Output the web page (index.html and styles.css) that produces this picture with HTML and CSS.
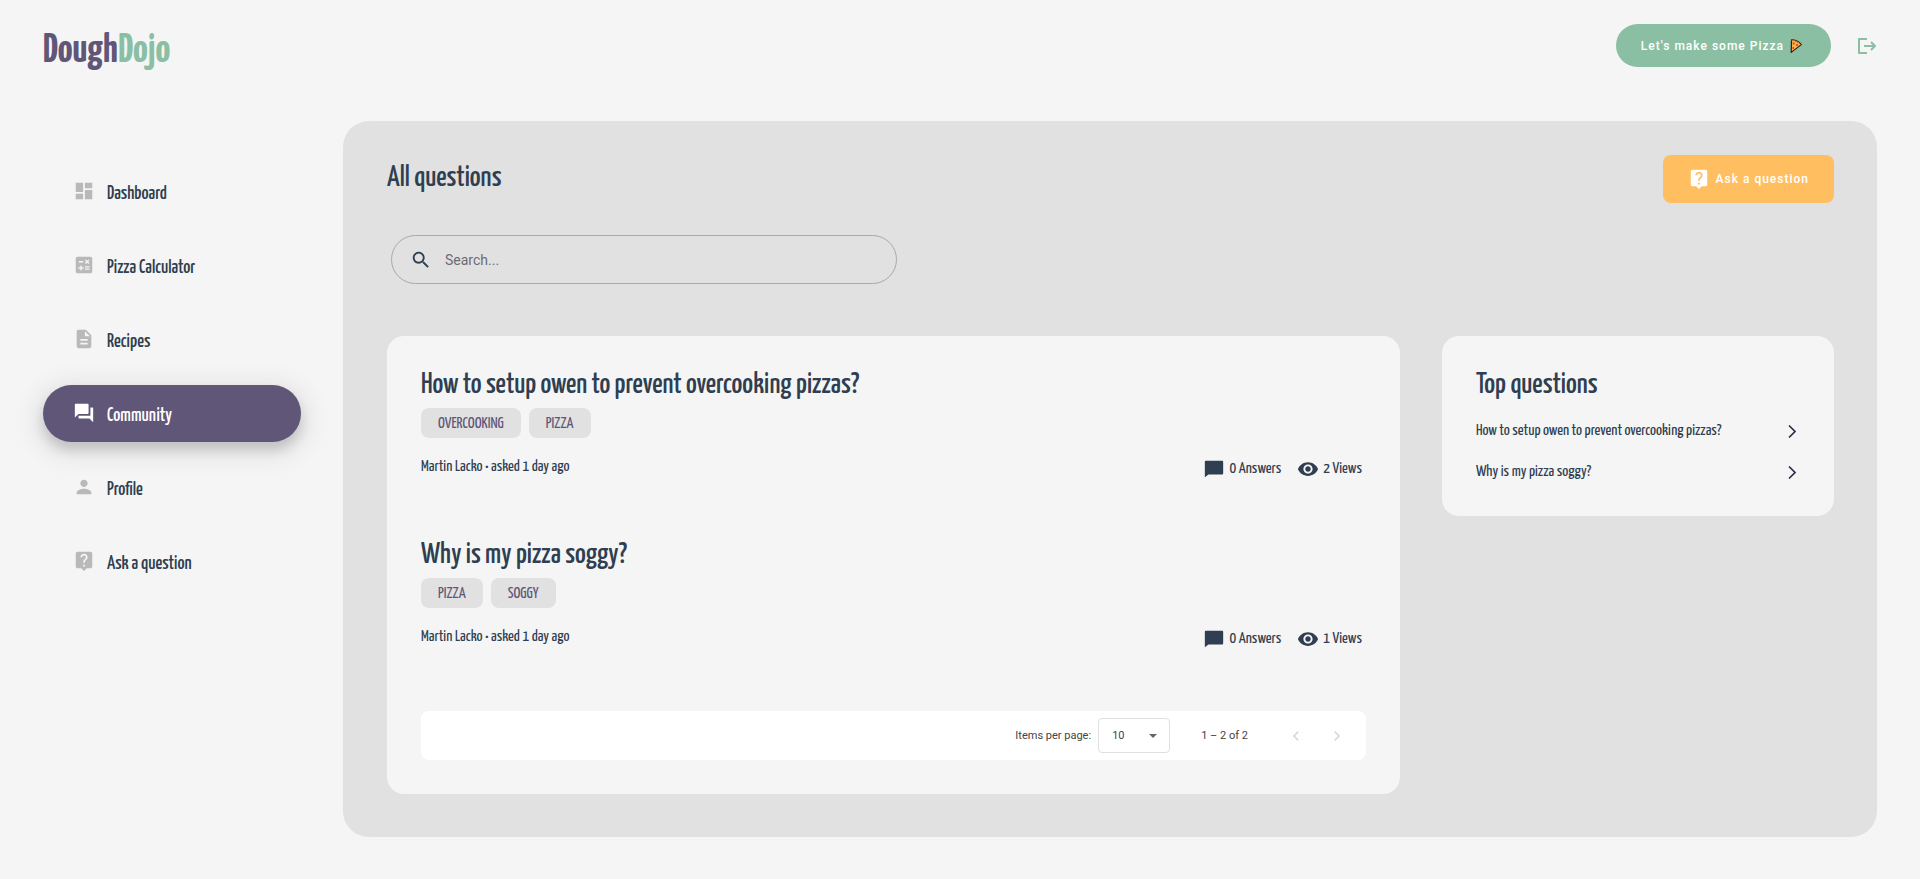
FILE: index.html
```html
<!DOCTYPE html>
<html lang="en">
<head>
    <meta charset="UTF-8">
    <meta name="viewport" content="width=device-width, initial-scale=1">
    <title>DoughDojo</title>
    <link rel="stylesheet" href="styles.css">
</head>
<body>
    <header class="header">
        <a href="#" class="logo">Dough<span class="logo-accent">Dojo</span></a>
        <div class="header-actions">
            <button class="btn btn-green">Let's make some Pizza
                <svg class="pizza" viewBox="0 0 12 14" preserveAspectRatio="xMinYMid"><path d="M1.5.8C5 .6 9.5 3 11.3 5.6L1.2 13.4z" fill="#f9b04a" stroke="#2b1d14" stroke-width="1.2" stroke-linejoin="round"/><path d="M1.6 1.4C5 1.2 9 3.3 10.8 5.7" fill="none" stroke="#c8742c" stroke-width="1"/><circle cx="3.6" cy="4.4" r="1" fill="#d9382c"/><circle cx="7" cy="6" r="1" fill="#d9382c"/><circle cx="3.2" cy="9" r=".9" fill="#d9382c"/></svg>
            </button>
            <button class="icon-btn logout" aria-label="Log out">
                <svg viewBox="0 0 20 18" fill="none" stroke="currentColor" stroke-width="2" stroke-linejoin="round"><path d="M10 2H2v14h8M7 9h11M14 5l4 4-4 4"/></svg>
            </button>
        </div>
    </header>

    <div class="layout">
        <nav class="sidebar">
            <a href="#" class="nav-item">
                <svg class="icon" viewBox="0 0 24 24"><path d="M3 13h8V3H3v10zm0 8h8v-6H3v6zm10 0h8V11h-8v10zm0-18v6h8V3h-8z"/></svg>
                <span>Dashboard</span>
            </a>
            <a href="#" class="nav-item">
                <svg class="icon" viewBox="0 0 24 24"><path d="M19 3H5c-1.1 0-2 .9-2 2v14c0 1.1.9 2 2 2h14c1.1 0 2-.9 2-2V5c0-1.1-.9-2-2-2zm-5.97 4.06L14.09 6l1.41 1.41L16.91 6l1.06 1.06-1.41 1.41 1.41 1.41-1.06 1.06-1.41-1.4-1.41 1.41-1.06-1.06 1.41-1.41-1.41-1.42zm-6.78.66h5v1.5h-5v-1.5zM11.5 16h-2v2H8v-2H6v-1.5h2v-2h1.5v2h2V16zm6.5 1.25h-5v-1.5h5v1.5zm0-2.5h-5v-1.5h5v1.5z"/></svg>
                <span>Pizza Calculator</span>
            </a>
            <a href="#" class="nav-item">
                <svg class="icon" viewBox="0 0 24 24"><path d="M14 2H6c-1.1 0-2 .9-2 2v16c0 1.1.9 2 2 2h12c1.1 0 2-.9 2-2V8l-6-6zm2 16H8v-2h8v2zm0-4H8v-2h8v2zm-3-5V3.5L18.5 9H13z"/></svg>
                <span>Recipes</span>
            </a>
            <a href="#" class="nav-item active">
                <svg class="icon" viewBox="0 0 24 24"><path d="M21 6h-2v9H6v2c0 .55.45 1 1 1h11l4 4V7c0-.55-.45-1-1-1zm-4 6V3c0-.55-.45-1-1-1H3c-.55 0-1 .45-1 1v14l4-4h10c.55 0 1-.45 1-1z"/></svg>
                <span>Community</span>
            </a>
            <a href="#" class="nav-item">
                <svg class="icon" viewBox="0 0 24 24"><path d="M12 12c2.21 0 4-1.79 4-4s-1.79-4-4-4-4 1.79-4 4 1.79 4 4 4zm0 2c-2.67 0-8 1.34-8 4v2h16v-2c0-2.66-5.33-4-8-4z"/></svg>
                <span>Profile</span>
            </a>
            <a href="#" class="nav-item">
                <svg class="icon" viewBox="0 0 24 24"><path d="M19 2H5c-1.11 0-2 .9-2 2v14c0 1.1.89 2 2 2h4l3 3 3-3h4c1.1 0 2-.9 2-2V4c0-1.1-.9-2-2-2zm-6 16h-2v-2h2v2zm2.07-7.75l-.9.92C13.45 11.9 13 12.5 13 14h-2v-.5c0-1.1.45-2.1 1.17-2.83l1.24-1.26c.37-.36.59-.86.59-1.41 0-1.1-.9-2-2-2s-2 .9-2 2H8c0-2.21 1.79-4 4-4s4 1.79 4 4c0 .88-.36 1.68-.93 2.25z"/></svg>
                <span>Ask a question</span>
            </a>
        </nav>

        <main class="panel">
            <div class="panel-head">
                <h1 class="title">All questions</h1>
                <button class="btn btn-orange">
                    <svg class="icon" viewBox="0 0 24 24"><path d="M19 2H5c-1.11 0-2 .9-2 2v14c0 1.1.89 2 2 2h4l3 3 3-3h4c1.1 0 2-.9 2-2V4c0-1.1-.9-2-2-2zm-6 16h-2v-2h2v2zm2.07-7.75l-.9.92C13.45 11.9 13 12.5 13 14h-2v-.5c0-1.1.45-2.1 1.17-2.83l1.24-1.26c.37-.36.59-.86.59-1.41 0-1.1-.9-2-2-2s-2 .9-2 2H8c0-2.21 1.79-4 4-4s4 1.79 4 4c0 .88-.36 1.68-.93 2.25z"/></svg>
                    Ask a question
                </button>
            </div>

            <label class="search">
                <svg class="icon" viewBox="0 0 24 24"><path d="M15.5 14h-.79l-.28-.27C15.41 12.59 16 11.11 16 9.5 16 5.91 13.09 3 9.5 3S3 5.91 3 9.5 5.91 16 9.5 16c1.61 0 3.09-.59 4.23-1.57l.27.28v.79l5 4.99L20.49 19l-4.99-5zm-6 0C7.01 14 5 11.99 5 9.5S7.01 5 9.5 5 14 7.01 14 9.5 11.99 14 9.5 14z"/></svg>
                <input type="text" placeholder="Search..." aria-label="Search">
            </label>

            <div class="columns">
                <section class="card">
                    <article class="question">
                        <h2 class="title">How to setup owen to prevent overcooking pizzas?</h2>
                        <div class="tags">
                            <span class="tag">OVERCOOKING</span>
                            <span class="tag">PIZZA</span>
                        </div>
                        <div class="meta">
                            <span>Martin Lacko • asked 1 day ago</span>
                            <div class="stats">
                                <span class="stat"><svg class="icon" viewBox="0 0 24 24"><path d="M21 3H3c-.6 0-1 .4-1 1v17l4-3h15c.6 0 1-.4 1-1V4c0-.6-.4-1-1-1z"/></svg>0 Answers</span>
                                <span class="stat"><svg class="icon" viewBox="0 0 24 24"><path d="M12 4.5C7 4.5 2.73 7.61 1 12c1.73 4.39 6 7.5 11 7.5s9.27-3.11 11-7.5c-1.73-4.39-6-7.5-11-7.5zM12 17c-2.76 0-5-2.24-5-5s2.24-5 5-5 5 2.24 5 5-2.24 5-5 5zm0-8c-1.66 0-3 1.34-3 3s1.34 3 3 3 3-1.34 3-3-1.34-3-3-3z"/></svg>2 Views</span>
                            </div>
                        </div>
                    </article>
                    <article class="question">
                        <h2 class="title">Why is my pizza soggy?</h2>
                        <div class="tags">
                            <span class="tag">PIZZA</span>
                            <span class="tag">SOGGY</span>
                        </div>
                        <div class="meta">
                            <span>Martin Lacko • asked 1 day ago</span>
                            <div class="stats">
                                <span class="stat"><svg class="icon" viewBox="0 0 24 24"><path d="M21 3H3c-.6 0-1 .4-1 1v17l4-3h15c.6 0 1-.4 1-1V4c0-.6-.4-1-1-1z"/></svg>0 Answers</span>
                                <span class="stat"><svg class="icon" viewBox="0 0 24 24"><path d="M12 4.5C7 4.5 2.73 7.61 1 12c1.73 4.39 6 7.5 11 7.5s9.27-3.11 11-7.5c-1.73-4.39-6-7.5-11-7.5zM12 17c-2.76 0-5-2.24-5-5s2.24-5 5-5 5 2.24 5 5-2.24 5-5 5zm0-8c-1.66 0-3 1.34-3 3s1.34 3 3 3 3-1.34 3-3-1.34-3-3-3z"/></svg>1 Views</span>
                            </div>
                        </div>
                    </article>

                    <div class="paginator">
                        <label for="pageSize">Items per page:</label>
                        <div class="select">
                            <select id="pageSize">
                                <option>5</option>
                                <option selected>10</option>
                                <option>25</option>
                            </select>
                        </div>
                        <span class="range">1 – 2 of 2</span>
                        <div class="pager">
                            <button class="icon-btn" disabled aria-label="Previous page"><svg viewBox="0 0 24 24"><path d="M15.41 7.41L14 6l-6 6 6 6 1.41-1.41L10.83 12z"/></svg></button>
                            <button class="icon-btn" disabled aria-label="Next page"><svg viewBox="0 0 24 24"><path d="M10 6L8.59 7.41 13.17 12l-4.58 4.59L10 18l6-6z"/></svg></button>
                        </div>
                    </div>
                </section>

                <aside class="card">
                    <h2 class="title">Top questions</h2>
                    <ul class="top-list">
                        <li><a href="#">How to setup owen to prevent overcooking pizzas?
                            <svg viewBox="0 0 8 13"><path d="M1 .5l6 6-6 6"/></svg></a></li>
                        <li><a href="#">Why is my pizza soggy?
                            <svg viewBox="0 0 8 13"><path d="M1 .5l6 6-6 6"/></svg></a></li>
                    </ul>
                </aside>
            </div>
        </main>
    </div>
</body>
</html>
```

FILE: styles.css
```css
* {
    box-sizing: border-box;
}

body {
    margin: 0;
    min-height: 100vh;
    padding: 24px 43px 42px;
    background: #f5f5f5;
    color: #2f3e50;
    font-family: 'Yanone Kaffeesatz', 'Liberation Sans Narrow', 'Liberation Sans', sans-serif;
    font-size: 16px;
    line-height: 20px;
}

a {
    color: inherit;
    text-decoration: none;
}

button, input, select {
    font-family: Roboto, sans-serif;
}

.icon {
    width: 22px;
    height: 22px;
    fill: currentColor;
    flex-shrink: 0;
}

/* header */
.header {
    display: flex;
    justify-content: space-between;
    align-items: flex-start;
    height: 43px;
    margin-bottom: 54px;
}

.logo {
    color: #605678;
    font-size: 41px;
    font-weight: bold;
    line-height: 54px;
}

.logo-accent {
    color: #8abfa3;
}

.header-actions {
    display: flex;
    align-items: center;
    gap: 26px;
}

.btn {
    display: flex;
    align-items: center;
    justify-content: center;
    gap: 6px;
    border: none;
    padding: 0 25px;
    color: white;
    font-size: 12px;
    font-weight: 500;
    letter-spacing: 1px;
    cursor: pointer;
}

.btn-green {
    height: 43px;
    border-radius: 22px;
    background: #8abfa3;
}

.btn-orange {
    height: 48px;
    border-radius: 8px;
    background: #ffbf61;
}

.pizza {
    width: 16px;
    height: 14px;
}

.icon-btn {
    display: flex;
    align-items: center;
    justify-content: center;
    border: none;
    padding: 0;
    background: none;
    cursor: pointer;
}

.logout {
    color: #8abfa3;
}

.logout svg {
    width: 20px;
    height: 18px;
}

/* sidebar */
.layout {
    display: flex;
    gap: 42px;
}

.sidebar {
    display: flex;
    flex-direction: column;
    gap: 17px;
    width: 258px;
    padding-top: 42px;
    flex-shrink: 0;
}

.nav-item {
    display: flex;
    align-items: center;
    gap: 12px;
    height: 57px;
    padding: 0 30px 2px;
    border-radius: 29px;
    font-size: 19px;
    font-weight: 500;
}

.nav-item span {
    padding-top: 6px;
}

.nav-item .icon {
    color: #b9b9bb;
}

.nav-item.active {
    background: #605678;
    color: white;
    box-shadow: 0 8px 12px rgba(47, 46, 65, 0.2), 0 6px 22px 12px rgba(0, 0, 0, 0.06);
}

.nav-item.active .icon {
    color: white;
}

/* main panel */
.panel {
    flex: 1;
    padding: 34px 43px 43px 44px;
    border-radius: 26px;
    background: #e1e1e1;
}

.panel-head {
    display: flex;
    justify-content: space-between;
    margin-bottom: 32px;
}

.title {
    margin: 0;
    padding-top: 4px;
    font-size: 29px;
    font-weight: 500;
    line-height: 40px;
}

.search {
    display: flex;
    align-items: center;
    gap: 13px;
    width: 35%;
    height: 49px;
    margin: 0 4px 52px;
    padding: 0 18px;
    border: 1px solid #a9a9ac;
    border-radius: 25px;
}

.search input {
    flex: 1;
    border: none;
    outline: none;
    padding: 0;
    background: none;
    font-size: 14px;
}

.search input::placeholder {
    color: #6c6c72;
}

.columns {
    display: grid;
    grid-template-columns: 31fr 12fr;
    align-items: start;
    gap: 42px;
}

.card {
    padding: 26px 34px 34px;
    border-radius: 17px;
    background: #f5f5f5;
}

/* questions */
.question {
    margin-bottom: 50px;
}

.tags {
    display: flex;
    gap: 8px;
    margin: 2px 0 19px;
}

.tag {
    padding: 6px 17px 4px;
    border-radius: 8px;
    background: #e1e1e1;
    color: #605678;
}

.meta {
    display: flex;
    justify-content: space-between;
    height: 25px;
}

.stats {
    display: flex;
    align-items: flex-start;
    gap: 16px;
    padding: 1px 4px 0 0;
}

.stat {
    display: flex;
    align-items: center;
    gap: 4px;
}

/* paginator */
.paginator {
    display: flex;
    align-items: center;
    justify-content: flex-end;
    height: 49px;
    margin-top: 59px;
    padding: 0 8px;
    border-radius: 8px;
    background: white;
    color: #444;
    font-family: Roboto, sans-serif;
    font-size: 11px;
}

.select {
    position: relative;
    margin: 0 31px 0 7px;
}

.select::after {
    content: '';
    position: absolute;
    right: 13px;
    top: 16px;
    border: 4px solid transparent;
    border-top-color: #666;
    pointer-events: none;
}

.select select {
    appearance: none;
    width: 72px;
    height: 35px;
    padding: 0 13px;
    border: 1px solid #e0e0e0;
    border-radius: 4px;
    background: white;
    color: #444;
    font-size: 11px;
}

.pager {
    display: flex;
    margin-left: 28px;
}

.pager .icon-btn {
    width: 41px;
    height: 41px;
}

.pager svg {
    width: 20px;
    height: 20px;
    fill: #d9d9d9;
}

/* top questions */
.top-list {
    display: flex;
    flex-direction: column;
    gap: 21px;
    margin: 15px 0 0;
    padding: 0;
    list-style: none;
}

.top-list a {
    display: flex;
    justify-content: space-between;
    align-items: center;
    padding-right: 4px;
}

.top-list svg {
    width: 8px;
    height: 13px;
    fill: none;
    stroke: #2c2c48;
    stroke-width: 1.6;
}
```
